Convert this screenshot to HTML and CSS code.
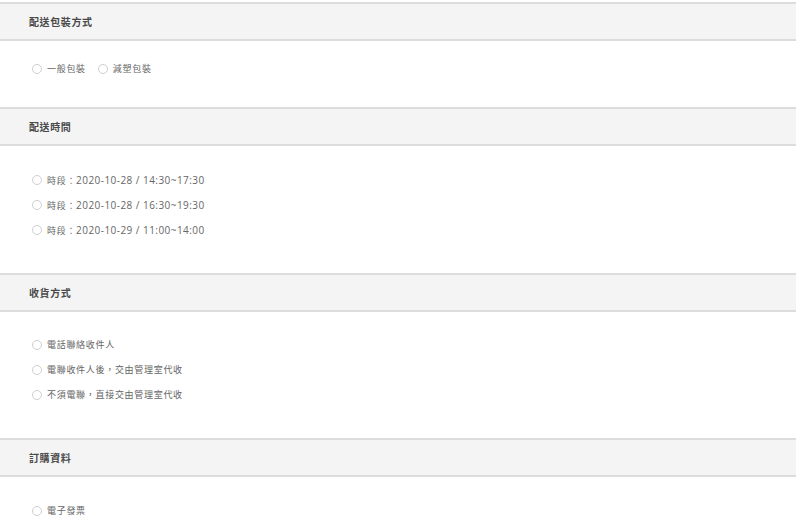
FILE: index.html
```html
<!DOCTYPE html>
<html lang="zh-Hant">
<head>
<meta charset="utf-8">
<link rel="stylesheet" href="styles.css">
</head>
<body>
<div class="page">
  <section class="block">
    <div class="block-head">配送包裝方式</div>
    <div class="block-body body-inline">
      <label class="opt"><span class="radio"></span><span class="txt">一般包裝</span></label>
      <label class="opt"><span class="radio"></span><span class="txt">減塑包裝</span></label>
    </div>
  </section>
  <section class="block">
    <div class="block-head">配送時間</div>
    <div class="block-body body-time">
      <label class="opt"><span class="radio"></span><span class="txt">時段：<span class="num">2020-10-28 / 14:30~17:30</span></span></label>
      <label class="opt"><span class="radio"></span><span class="txt">時段：<span class="num">2020-10-28 / 16:30~19:30</span></span></label>
      <label class="opt"><span class="radio"></span><span class="txt">時段：<span class="num">2020-10-29 / 11:00~14:00</span></span></label>
    </div>
  </section>
  <section class="block">
    <div class="block-head">收貨方式</div>
    <div class="block-body">
      <label class="opt"><span class="radio"></span><span class="txt">電話聯絡收件人</span></label>
      <label class="opt"><span class="radio"></span><span class="txt">電聯收件人後，交由管理室代收</span></label>
      <label class="opt"><span class="radio"></span><span class="txt">不須電聯，直接交由管理室代收</span></label>
    </div>
  </section>
  <section class="block">
    <div class="block-head">訂購資料</div>
    <div class="block-body body-last">
      <label class="opt"><span class="radio"></span><span class="txt">電子發票</span></label>
    </div>
  </section>
</div>
</body>
</html>
```
FILE: styles.css
```css
html, body {
  margin: 0;
  padding: 0;
  background: #ffffff;
}
.page {
  width: 796px;
  padding-top: 2px;
  font-family: "Open Sans", "Noto Sans CJK TC", sans-serif;
}
.block-head {
  box-sizing: border-box;
  height: 39px;
  border-top: 2px solid #dcdcdc;
  border-bottom: 2px solid #dcdcdc;
  background: #f4f4f4;
  padding-left: 29px;
  display: flex;
  align-items: center;
  font-size: 10px;
  font-weight: 700;
  letter-spacing: 0.6px;
  color: #4a4a4a;
}
.block-body {
  box-sizing: border-box;
  height: 126px;
  padding: 20px 0 0 32px;
  display: flex;
  flex-direction: column;
}
.block-body.body-inline {
  height: 66px;
  padding-top: 15px;
  flex-direction: row;
  gap: 12px;
}
.block-body.body-time {
  height: 127px;
  padding-top: 21px;
}
.block-body.body-last {
  padding-top: 21px;
}
.opt {
  height: 25px;
  display: flex;
  align-items: center;
  gap: 5px;
  font-size: 9px;
  letter-spacing: 0.7px;
  color: #666666;
}
.num {
  font-size: 10px;
  letter-spacing: 0.45px;
}
.radio {
  box-sizing: border-box;
  width: 10px;
  height: 10px;
  border: 1px solid #cfcfcf;
  border-radius: 50%;
  background: #ffffff;
}
```
